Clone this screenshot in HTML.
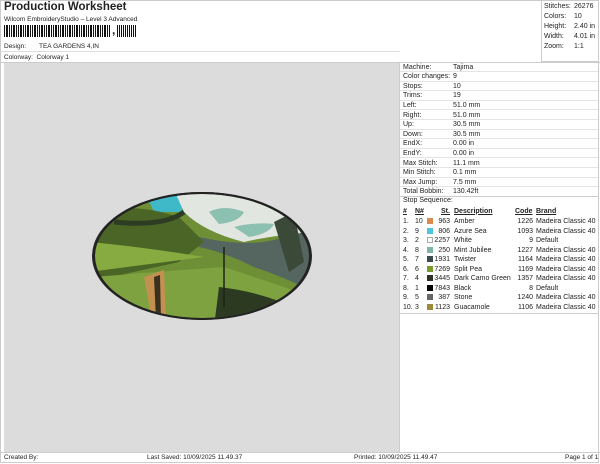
<!DOCTYPE html>
<html><head><style>
*{margin:0;padding:0;box-sizing:border-box}
body{width:600px;height:464px;background:#fff;font-family:"Liberation Sans",sans-serif;font-size:7px;color:#222;position:relative;overflow:hidden}
.a{position:absolute;white-space:nowrap;line-height:9px}
.r{position:absolute;left:400px;width:198px;height:9.6px;border-bottom:1px solid #e4e4e4}
.r span{position:absolute;top:0;line-height:9px}
.t{position:absolute;left:400px;width:198px;height:9.55px}
.t span{position:absolute;top:0;line-height:9px}
.sw{width:6px;height:6px;top:1px!important}
u{text-decoration:underline;font-weight:bold}
</style></head><body>
<div class="a" style="left:4px;top:1px;font-size:11.5px;font-weight:bold;line-height:13px">Production Worksheet</div>
<div class="a" style="left:4px;top:15px;font-size:6.5px">Wilcom EmbroideryStudio – Level 3 Advanced</div>
<div class="a" style="left:4px;top:25px;width:107px;height:12px;background:repeating-linear-gradient(90deg,#111 0 1px,#fff 1px 2px,#111 2px 3px,#111 3px 4px,#fff 4px 5px,#111 5px 6px,#fff 6px 7px)"></div>
<div class="a" style="left:112px;top:26px;font-size:12px;font-weight:bold">,</div>
<div class="a" style="left:117px;top:25px;width:19px;height:12px;background:repeating-linear-gradient(90deg,#111 0 1px,#fff 1px 2px,#111 2px 3px,#fff 3px 4px)"></div>
<div class="a" style="left:4px;top:42px;font-size:6.5px">Design:</div>
<div class="a" style="left:39px;top:42px;font-size:6.5px">TEA GARDENS 4,IN</div>
<div class="a" style="left:0;top:51px;width:400px;border-top:1px solid #ddd"></div>
<div class="a" style="left:4px;top:53px;font-size:6.5px">Colorway:&nbsp; Colorway 1</div>
<div class="a" style="left:0;top:0;width:599px;height:463px;border:1px solid #ccc"></div>
<div class="a" style="left:541px;top:0;width:58px;height:62px;border-left:1px solid #ccc;border-bottom:1px solid #ccc"></div>
<div class="a" style="left:544px;top:2px;line-height:10px">Stitches:<br>Colors:<br>Height:<br>Width:<br>Zoom:</div>
<div class="a" style="left:574px;top:2px;line-height:10px">26276<br>10<br>2.40 in<br>4.01 in<br>1:1</div>
<div class="a" style="left:4px;top:62px;width:396px;height:390px;background:#dcdcdc;border-right:1px solid #ccc"></div>
<div class="a" style="left:0;top:62px;width:600px;border-top:1px solid #ccc"></div>
<svg class="a" style="left:4px;top:62px" width="396" height="390">
<defs><clipPath id="c"><ellipse cx="198" cy="194" rx="107" ry="62"/></clipPath></defs>
<ellipse cx="198" cy="194" rx="110" ry="64" fill="#2a2a2a"/>
<g clip-path="url(#c)">
<rect x="80" y="125" width="240" height="140" fill="#6f8f36"/>
<path d="M140 128 L180 128 L178 150 L150 150Z" fill="#3fb8c8"/>
<path d="M170 128 L300 128 L305 170 Q260 175 240 180 Q200 170 180 150Z" fill="#e2e6e0"/>
<path d="M205 150 Q220 142 240 150 Q235 160 215 162Z" fill="#8cc0b0"/>
<path d="M230 165 Q250 160 270 162 Q265 172 245 175Z" fill="#8cc0b0"/>
<path d="M195 175 Q240 185 270 178 Q300 170 310 168 L310 230 Q280 215 250 205 Q220 190 195 185Z" fill="#55655f"/>
<path d="M85 150 Q130 140 175 155 L200 180 L175 200 L85 220Z" fill="#4a6526"/>
<path d="M85 180 Q140 185 200 195 L85 210Z" fill="#87ab40"/>
<path d="M90 215 Q150 210 220 205 L310 235 L310 265 L85 265Z" fill="#7ea240"/>
<path d="M215 225 Q260 230 300 250 L295 265 L210 265Z" fill="#2b3a20"/>
<path d="M140 215 L160 208 L162 258 L148 258Z" fill="#c49050"/>
<path d="M150 215 L156 213 L157 258 L152 258Z" fill="#3a3020"/>
<path d="M110 160 Q160 165 180 150" stroke="#2d3c22" stroke-width="5" fill="none"/>
<path d="M220 185 L220 245" stroke="#1a2414" stroke-width="1.5"/>
<path d="M270 160 L290 150 L300 200 L285 210Z" fill="#3b4a38"/>
</g>
<ellipse cx="198" cy="194" rx="108" ry="63" fill="none" stroke="#222" stroke-width="2"/>
</svg>
<div class="r" style="top:62.5px"><span style="left:3px">Machine:</span><span style="left:53px">Tajima</span></div>
<div class="r" style="top:72.1px"><span style="left:3px">Color changes:</span><span style="left:53px">9</span></div>
<div class="r" style="top:81.7px"><span style="left:3px">Stops:</span><span style="left:53px">10</span></div>
<div class="r" style="top:91.3px"><span style="left:3px">Trims:</span><span style="left:53px">19</span></div>
<div class="r" style="top:100.9px"><span style="left:3px">Left:</span><span style="left:53px">51.0 mm</span></div>
<div class="r" style="top:110.5px"><span style="left:3px">Right:</span><span style="left:53px">51.0 mm</span></div>
<div class="r" style="top:120.1px"><span style="left:3px">Up:</span><span style="left:53px">30.5 mm</span></div>
<div class="r" style="top:129.7px"><span style="left:3px">Down:</span><span style="left:53px">30.5 mm</span></div>
<div class="r" style="top:139.3px"><span style="left:3px">EndX:</span><span style="left:53px">0.00 in</span></div>
<div class="r" style="top:148.9px"><span style="left:3px">EndY:</span><span style="left:53px">0.00 in</span></div>
<div class="r" style="top:158.5px"><span style="left:3px">Max Stitch:</span><span style="left:53px">11.1 mm</span></div>
<div class="r" style="top:168.1px"><span style="left:3px">Min Stitch:</span><span style="left:53px">0.1 mm</span></div>
<div class="r" style="top:177.7px"><span style="left:3px">Max Jump:</span><span style="left:53px">7.5 mm</span></div>
<div class="r" style="top:187.3px;border-bottom:1px solid #ccc"><span style="left:3px">Total Bobbin:</span><span style="left:53px">130.42ft</span></div>
<div class="t" style="top:196px"><span style="left:3px">Stop Sequence:</span></div>
<div class="t" style="top:206.5px"><span style="left:3px"><u>#</u></span><span style="left:15px"><u>N#</u></span><span style="left:41px"><u>St.</u></span><span style="left:54px"><u>Description</u></span><span style="left:115px"><u>Code</u></span><span style="left:136px"><u>Brand</u></span></div>
<div style="position:absolute;left:0;top:217px">
<div class="t" style="top:0"><span style="left:3px">1.</span><span style="left:15px">10</span><span class="sw" style="left:27px;background:#d98a4e"></span><span style="right:148px">963</span><span style="left:54px">Amber</span><span style="right:65px">1226</span><span style="left:136px">Madeira Classic 40</span></div>
<div class="t" style="top:9.55px"><span style="left:3px">2.</span><span style="left:15px">9</span><span class="sw" style="left:27px;background:#4fc6e0"></span><span style="right:148px">806</span><span style="left:54px">Azure Sea</span><span style="right:65px">1093</span><span style="left:136px">Madeira Classic 40</span></div>
<div class="t" style="top:19.1px"><span style="left:3px">3.</span><span style="left:15px">2</span><span class="sw" style="left:27px;background:#fff;border:1px solid #aaa"></span><span style="right:148px">2257</span><span style="left:54px">White</span><span style="right:65px">9</span><span style="left:136px">Default</span></div>
<div class="t" style="top:28.65px"><span style="left:3px">4.</span><span style="left:15px">8</span><span class="sw" style="left:27px;background:#7fb3a8"></span><span style="right:148px">250</span><span style="left:54px">Mint Jubilee</span><span style="right:65px">1227</span><span style="left:136px">Madeira Classic 40</span></div>
<div class="t" style="top:38.2px"><span style="left:3px">5.</span><span style="left:15px">7</span><span class="sw" style="left:27px;background:#3c4a50"></span><span style="right:148px">1931</span><span style="left:54px">Twister</span><span style="right:65px">1164</span><span style="left:136px">Madeira Classic 40</span></div>
<div class="t" style="top:47.75px"><span style="left:3px">6.</span><span style="left:15px">6</span><span class="sw" style="left:27px;background:#7a9a2e"></span><span style="right:148px">7269</span><span style="left:54px">Split Pea</span><span style="right:65px">1169</span><span style="left:136px">Madeira Classic 40</span></div>
<div class="t" style="top:57.3px"><span style="left:3px">7.</span><span style="left:15px">4</span><span class="sw" style="left:27px;background:#2c3324"></span><span style="right:148px">3445</span><span style="left:54px">Dark Camo Green</span><span style="right:65px">1357</span><span style="left:136px">Madeira Classic 40</span></div>
<div class="t" style="top:66.85px"><span style="left:3px">8.</span><span style="left:15px">1</span><span class="sw" style="left:27px;background:#000"></span><span style="right:148px">7843</span><span style="left:54px">Black</span><span style="right:65px">8</span><span style="left:136px">Default</span></div>
<div class="t" style="top:76.4px"><span style="left:3px">9.</span><span style="left:15px">5</span><span class="sw" style="left:27px;background:#666"></span><span style="right:148px">387</span><span style="left:54px">Stone</span><span style="right:65px">1240</span><span style="left:136px">Madeira Classic 40</span></div>
<div class="t" style="top:85.95px"><span style="left:3px">10.</span><span style="left:15px">3</span><span class="sw" style="left:27px;background:#9a8a3a"></span><span style="right:148px">1123</span><span style="left:54px">Guacamole</span><span style="right:65px">1106</span><span style="left:136px">Madeira Classic 40</span></div>
</div>
<div class="a" style="left:400px;top:313px;width:199px;border-top:1px solid #ccc"></div>
<div class="a" style="left:0;top:452px;width:600px;border-top:1px solid #ccc"></div>
<div class="a" style="left:4px;top:453px;font-size:6.5px">Created By:</div>
<div class="a" style="left:147px;top:453px;font-size:6.5px">Last Saved: 10/09/2025 11.49.37</div>
<div class="a" style="left:354px;top:453px;font-size:6.5px">Printed: 10/09/2025 11.49.47</div>
<div class="a" style="left:565px;top:453px;font-size:6.5px">Page 1 of 1</div>
</body></html>
